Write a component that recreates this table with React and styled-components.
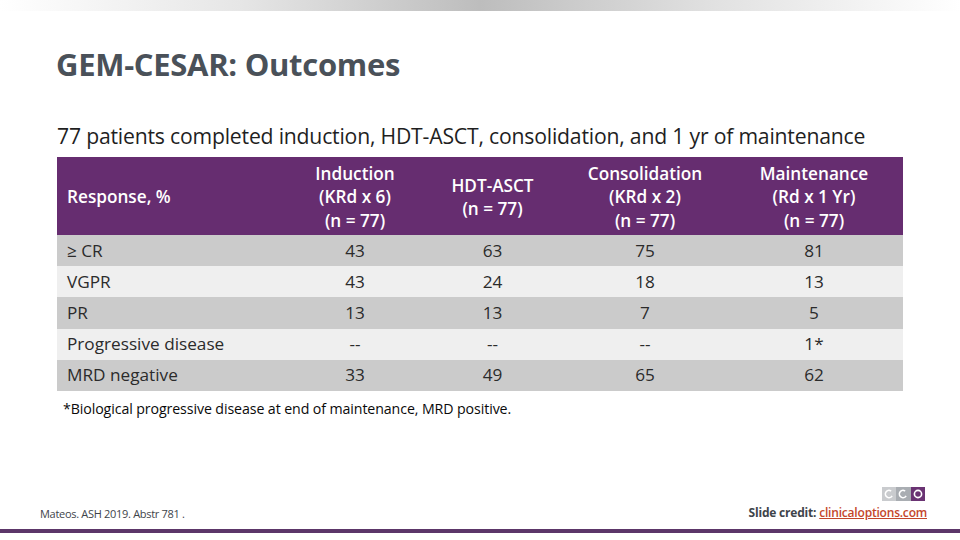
import React from 'react';
import styled, { createGlobalStyle } from 'styled-components';

const GlobalStyle = createGlobalStyle`
    html, body {
        margin: 0;
        padding: 0;
        background: #ffffff;
    }
    body {
        font-family: "Open Sans", "Noto Sans", sans-serif;
    }
`;

const Slide = styled.div`
    width: 960px;
    height: 540px;
    display: flex;
    flex-direction: column;
    background: #fff;
    overflow: hidden;
`;

const TopBar = styled.div`
    height: 11px;
    background: linear-gradient(to right, #ffffff 0%, #e6e6e6 25%, #bdbdbd 50%, #e2e2e2 75%, #ffffff 100%);
`;

const Title = styled.h1`
    margin: 37px 0 0 56px;
    font-size: 31px;
    line-height: 32px;
    font-weight: 700;
    letter-spacing: -0.3px;
    color: #4a5159;
`;

const Subtitle = styled.p`
    margin: 43px 0 0 57px;
    font-size: 21.2px;
    line-height: 26px;
    color: #1f1f1f;
    letter-spacing: -0.2px;
`;

const Table = styled.table`
    margin: 8px 0 0 57px;
    width: 846px;
    border-collapse: collapse;
    table-layout: fixed;
    font-size: 17.2px;
    color: #2b2b2b;
`;

const HeadCell = styled.th`
    background: #662d70;
    color: #fff;
    font-weight: 600;
    line-height: 23.5px;
    height: 76px;
    padding: 0;
    padding-top: 2px;
    text-align: ${(p) => (p.left ? 'left' : 'center')};
    padding-left: ${(p) => (p.left ? '10px' : '0')};
    vertical-align: middle;
`;

const Row = styled.tr`
    background: ${(p) => (p.shade ? '#cbcbcb' : '#efefef')};
    height: 31.2px;
`;

const Cell = styled.td`
    padding: 0;
    padding-left: ${(p) => (p.left ? '10px' : '0')};
    text-align: ${(p) => (p.left ? 'left' : 'center')};
    line-height: 22px;
`;

const Footnote = styled.p`
    margin: 8px 0 0 63px;
    font-size: 14.2px;
    color: #0a0a0a;
    letter-spacing: -0.1px;
`;

const Footer = styled.div`
    margin-top: auto;
    display: flex;
    justify-content: space-between;
    align-items: flex-end;
    padding: 0 33px 8px 40px;
`;

const Reference = styled.span`
    font-size: 11px;
    color: #3e444a;
    letter-spacing: -0.3px;
`;

const Credit = styled.div`
    display: flex;
    flex-direction: column;
    align-items: flex-end;
    gap: 3px;
`;

const CreditText = styled.span`
    font-size: 12px;
    font-weight: 700;
    color: #3e444a;
    letter-spacing: -0.2px;

    a {
        color: #c4462a;
        text-decoration: underline;
        font-weight: 600;
    }
`;

const Logo = styled.div`
    display: flex;
    margin-right: 2px;
`;

const LogoBox = styled.div`
    width: 14.5px;
    height: 14px;
    background: ${(p) => p.bg};
    display: flex;
    align-items: center;
    justify-content: center;
`;

const BottomLine = styled.div`
    height: 4px;
    background: #5c3669;
    margin-bottom: 7px;
`;

const columns = [
    { label: ['Induction', '(KRd x 6)', '(n = 77)'], width: 130 },
    { label: ['HDT-ASCT', '(n = 77)'], width: 145 },
    { label: ['Consolidation', '(KRd x 2)', '(n = 77)'], width: 160 },
    { label: ['Maintenance', '(Rd x 1 Yr)', '(n = 77)'], width: 178 },
];

const rows = [
    ['≥ CR', '43', '63', '75', '81'],
    ['VGPR', '43', '24', '18', '13'],
    ['PR', '13', '13', '7', '5'],
    ['Progressive disease', '--', '--', '--', '1*'],
    ['MRD negative', '33', '49', '65', '62'],
];

const Ring = ({ color, open }) => (
    <svg width="10" height="10" viewBox="0 0 10 10">
        <circle
            cx="5"
            cy="5"
            r="3.6"
            fill="none"
            stroke={color}
            strokeWidth="1.6"
            strokeDasharray={open ? '17 6' : undefined}
            transform={open ? 'rotate(30 5 5)' : undefined}
        />
    </svg>
);

export default function App() {
    return (
        <Slide>
            <GlobalStyle />
            <TopBar />
            <Title>GEM-CESAR: Outcomes</Title>
            <Subtitle>77 patients completed induction, HDT-ASCT, consolidation, and 1 yr of maintenance</Subtitle>
            <Table>
                <colgroup>
                    <col style={{ width: 233 }} />
                    {columns.map((c, i) => (
                        <col key={i} style={{ width: c.width }} />
                    ))}
                </colgroup>
                <thead>
                    <tr>
                        <HeadCell left>Response, %</HeadCell>
                        {columns.map((c, i) => (
                            <HeadCell key={i}>
                                {c.label.map((l, j) => (
                                    <div key={j}>{l}</div>
                                ))}
                            </HeadCell>
                        ))}
                    </tr>
                </thead>
                <tbody>
                    {rows.map((r, i) => (
                        <Row key={i} shade={i % 2 === 0}>
                            {r.map((v, j) => (
                                <Cell key={j} left={j === 0}>{v}</Cell>
                            ))}
                        </Row>
                    ))}
                </tbody>
            </Table>
            <Footnote>*Biological progressive disease at end of maintenance, MRD positive.</Footnote>
            <Footer>
                <Reference>Mateos. ASH 2019. Abstr 781 .</Reference>
                <Credit>
                    <Logo>
                        <LogoBox bg="#c9cbce"><Ring color="#ffffff" open /></LogoBox>
                        <LogoBox bg="#a9adb2"><Ring color="#ffffff" open /></LogoBox>
                        <LogoBox bg="#6a3373"><Ring color="#ffffff" /></LogoBox>
                    </Logo>
                    <CreditText>
                        Slide credit: <a href="#">clinicaloptions.com</a>
                    </CreditText>
                </Credit>
            </Footer>
            <BottomLine />
        </Slide>
    );
}
